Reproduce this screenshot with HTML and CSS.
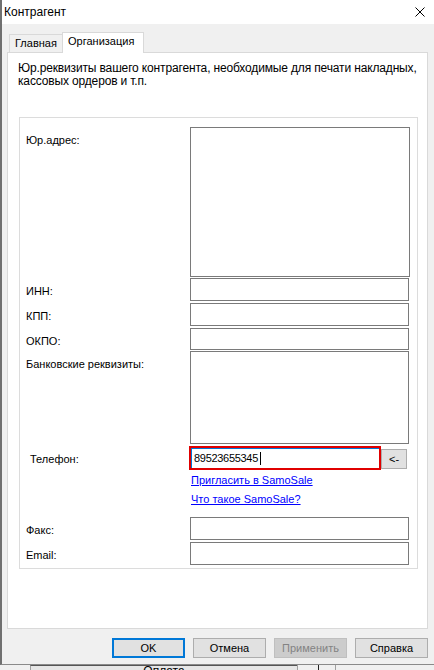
FILE: index.html
```html
<!DOCTYPE html>
<html lang="ru">

<head>
    <meta charset="UTF-8">
    <meta name="viewport" content="width=device-width, initial-scale=1.0">
    <title>Контрагент</title>
    <link rel="stylesheet" href="styles.css">
</head>

<body>

    <div class="dialog">
        <div class="titlebar">
            <span>Контрагент</span>
            <svg class="close" width="10" height="10" viewBox="0 0 10 10">
                <path d="M0.5 0.5L9.5 9.5M9.5 0.5L0.5 9.5" stroke="#000" stroke-width="1" fill="none" />
            </svg>
        </div>
        <div class="client">
            <div class="tabs">
                <div class="tab">Главная</div>
                <div class="tab active">Организация</div>
            </div>
            <div class="panel">
                <p class="hint">Юр.реквизиты вашего контрагента, необходимые для печати накладных,<br>кассовых ордеров и т.п.</p>
                <div class="group">
                    <div class="row">
                        <label>Юр.адрес:</label>
                        <textarea class="field area-addr"></textarea>
                    </div>
                    <div class="row r-inn">
                        <label>ИНН:</label>
                        <input class="field" type="text">
                    </div>
                    <div class="row r-kpp">
                        <label>КПП:</label>
                        <input class="field" type="text">
                    </div>
                    <div class="row r-okpo">
                        <label>ОКПО:</label>
                        <input class="field okpo" type="text">
                    </div>
                    <div class="row r-bank">
                        <label>Банковские реквизиты:</label>
                        <textarea class="field area-bank"></textarea>
                    </div>
                    <div class="row r-phone">
                        <label>Телефон:</label>
                        <div class="phone">89523655345<span class="caret"></span></div>
                        <button class="pick">&lt;-</button>
                    </div>
                    <div class="link-row first"><a href="#">Пригласить в SamoSale</a></div>
                    <div class="link-row"><a href="#">Что такое SamoSale?</a></div>
                    <div class="row r-fax">
                        <label>Факс:</label>
                        <input class="field" type="text">
                    </div>
                    <div class="row r-mail">
                        <label>Email:</label>
                        <input class="field" type="text">
                    </div>
                </div>
            </div>
            <div class="buttons">
                <button class="btn default">OK</button>
                <button class="btn">Отмена</button>
                <button class="btn" disabled>Применить</button>
                <button class="btn">Справка</button>
            </div>
        </div>
    </div>
    <div class="behind">
        <div class="cell c1"></div>
        <div class="cell c2">Оплата</div>
        <div class="cell c3"></div>
        <div class="cell c4"></div>
        <div class="cell c5"></div>
    </div>

</body>

</html>
```

FILE: styles.css
```css
* {
    padding: 0;
    margin: 0;
    box-sizing: border-box;
}

body {
    width: 434px;
    height: 670px;
    overflow: hidden;
    font: 11px/15px "Liberation Sans", Arial, sans-serif;
    color: #000;
    background: #f0f0f0;
}

.dialog {
    height: 665px;
    background: #f0f0f0;
    border-left: 2px solid #707070;
    border-bottom: 1px solid #8a8a8a;
}

.titlebar {
    height: 24px;
    background: #fff;
    display: flex;
    align-items: center;
    justify-content: space-between;
    padding: 0 9px 0 2px;
    font-size: 12px;
}

.client {
    padding: 8px 0 0 5px;
}

/* вкладки */

.tabs {
    display: flex;
    align-items: flex-end;
    height: 20px;
    padding-left: 2px;
}

.tab {
    width: 53px;
    height: 18px;
    line-height: 17px;
    padding-left: 5px;
    background: #f0f0f0;
    border: 1px solid #d9d9d9;
    border-right: none;
    border-bottom: none;
}

.tab.active {
    width: 82px;
    height: 21px;
    margin-bottom: -1px;
    background: #fff;
    border-right: 1px solid #d9d9d9;
    position: relative;
    z-index: 1;
}

.panel {
    width: 421px;
    height: 577px;
    background: #fff;
    border: 1px solid #d9d9d9;
    padding: 9px 0 0 10px;
}

.hint {
    font-size: 12px;
    line-height: 13px;
    letter-spacing: -0.15px;
}

.group {
    width: 399px;
    margin: 29px 0 0 1px;
    padding: 9px 0 3px;
    border: 1px solid #dcdcdc;
}

.row {
    display: flex;
}

.row label {
    flex: none;
    width: 170px;
    padding: 6px 0 0 6px;
}

.field {
    display: block;
    width: 219px;
    height: 23px;
    border: 1px solid #7a7a7a;
    background: #fff;
    font: inherit;
    outline: none;
    resize: none;
}

.area-addr {
    width: 220px;
    height: 150px;
}

.r-inn {
    margin-top: 1px;
}

.r-kpp,
.r-okpo,
.r-phone,
.r-mail {
    margin-top: 2px;
}

.okpo {
    height: 22px;
}

.r-bank {
    margin-top: 1px;
}

.area-bank {
    height: 93px;
}

/* телефон */

.r-phone label {
    padding-left: 10px;
}

.phone {
    display: flex;
    align-items: center;
    width: 192px;
    height: 24px;
    margin-left: -1px;
    padding-left: 3px;
    border: 2px solid #e00000;
    box-shadow: inset 1px 1px 0 #0078d7;
    background: #fff;
    letter-spacing: -0.3px;
}

.caret {
    width: 1px;
    height: 13px;
    margin-left: 2px;
    background: #000;
}

.pick {
    width: 26px;
    height: 20px;
    margin-top: 3px;
    border: 1px solid #adadad;
    background: #e1e1e1;
    font: inherit;
    line-height: 17px;
}

.link-row {
    padding-left: 171px;
    margin-top: 4px;
}

.link-row.first {
    margin-top: 3px;
}

.link-row a {
    color: #0000ff;
}

.r-fax {
    margin-top: 10px;
}

/* кнопки */

.buttons {
    display: flex;
    justify-content: flex-end;
    gap: 8px;
    margin-top: 9px;
    padding-right: 6px;
}

.btn {
    width: 73px;
    height: 20px;
    border: 1px solid #adadad;
    background: #e1e1e1;
    font: inherit;
    line-height: 17px;
    color: #000;
}

.btn.default {
    border: 2px solid #0078d7;
}

.btn:disabled {
    background: #cccccc;
    border-color: #bfbfbf;
    color: #838383;
}

/* окно позади */

.behind {
    display: flex;
    height: 5px;
    background: #f0f0f0;
    overflow: hidden;
}

.cell {
    height: 5px;
    border-left: 1px solid #a0a0a0;
}

.c1 {
    width: 30px;
    border-left: none;
}

.c2 {
    width: 267px;
    font-size: 12px;
    line-height: 11px;
    text-align: center;
    background: #e6e6e6;
    border-top: 1px solid #555;
}

.c3 {
    width: 21px;
}

.c4 {
    width: 17px;
    border-left-color: #222;
}

.c5 {
    flex: 1;
}
```
